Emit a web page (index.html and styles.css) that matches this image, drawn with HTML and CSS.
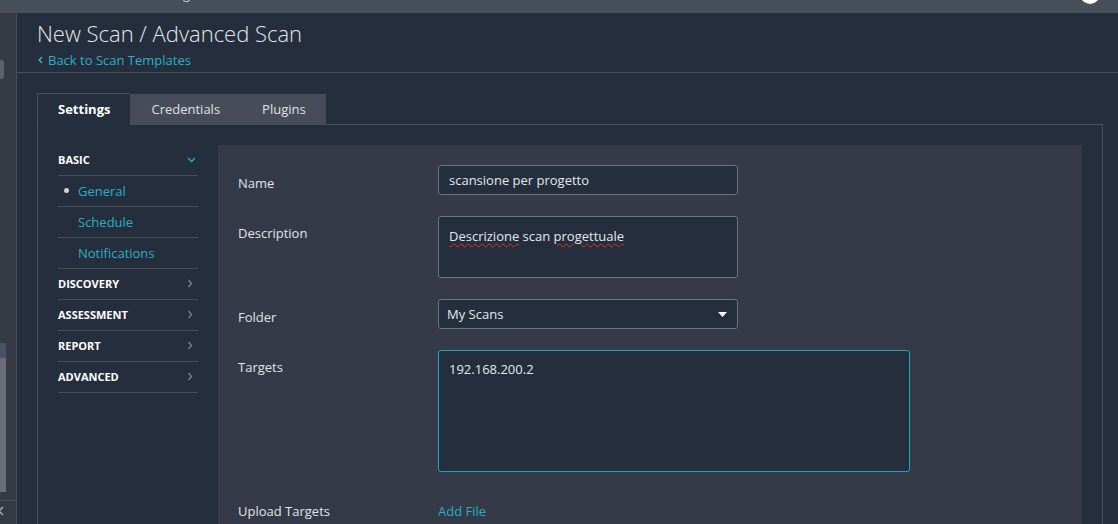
FILE: index.html
```html
<!DOCTYPE html>
<html lang="en">
<head>
<meta charset="utf-8">
<title>New Scan / Advanced Scan</title>
<link rel="stylesheet" href="styles.css">
</head>
<body>
<div class="topbar">
  <span class="top-frag">g</span>
  <span class="avatar"></span>
</div>
<div class="layout">
  <aside class="rail">
    <div class="rail-knob"></div>
    <div class="rail-track">
      <div class="rail-track-top"></div>
      <div class="rail-thumb"></div>
    </div>
    <div class="rail-foot">
      <svg width="8" height="12" viewBox="0 0 8 12"><path d="M6 2 L2 6 L6 10" fill="none" stroke="#aab2c0" stroke-width="1.3"/></svg>
    </div>
  </aside>
  <main class="main">
    <header class="page-head">
      <h1 class="title">New Scan / Advanced Scan</h1>
      <a class="back" href="#">
        <svg class="back-icon" width="5" height="8" viewBox="0 0 5 8"><path d="M4 1 L1.2 4 L4 7" fill="none" stroke="#29b0c8" stroke-width="1.6"/></svg>
        Back to Scan Templates
      </a>
    </header>
    <div class="content">
      <nav class="tabs">
        <span class="tab active">Settings</span>
        <span class="tab">Credentials</span>
        <span class="tab">Plugins</span>
      </nav>
      <div class="panel">
        <ul class="menu">
          <li class="menu-row head open">
            <span>BASIC</span>
            <svg class="chev" width="9" height="6" viewBox="0 0 9 6"><path d="M1 1 L4.5 4.5 L8 1" fill="none" stroke="#29b0c8" stroke-width="1.3"/></svg>
          </li>
          <li class="menu-row sub current"><span class="dot"></span>General</li>
          <li class="menu-row sub">Schedule</li>
          <li class="menu-row sub">Notifications</li>
          <li class="menu-row head">
            <span>DISCOVERY</span>
            <svg class="chev" width="6" height="9" viewBox="0 0 6 9"><path d="M1.5 1 L4.5 4.5 L1.5 8" fill="none" stroke="#7b88a2" stroke-width="1.2"/></svg>
          </li>
          <li class="menu-row head">
            <span>ASSESSMENT</span>
            <svg class="chev" width="6" height="9" viewBox="0 0 6 9"><path d="M1.5 1 L4.5 4.5 L1.5 8" fill="none" stroke="#7b88a2" stroke-width="1.2"/></svg>
          </li>
          <li class="menu-row head">
            <span>REPORT</span>
            <svg class="chev" width="6" height="9" viewBox="0 0 6 9"><path d="M1.5 1 L4.5 4.5 L1.5 8" fill="none" stroke="#7b88a2" stroke-width="1.2"/></svg>
          </li>
          <li class="menu-row head">
            <span>ADVANCED</span>
            <svg class="chev" width="6" height="9" viewBox="0 0 6 9"><path d="M1.5 1 L4.5 4.5 L1.5 8" fill="none" stroke="#7b88a2" stroke-width="1.2"/></svg>
          </li>
        </ul>
        <div class="form">
          <div class="row">
            <div class="label">Name</div>
            <div class="field input">scansione per progetto</div>
          </div>
          <div class="row">
            <div class="label tight">Description</div>
            <div class="field textarea desc"><span class="spell">Descrizione</span> scan <span class="spell">progettuale</span></div>
          </div>
          <div class="row">
            <div class="label">Folder</div>
            <div class="field select">
              <span>My Scans</span>
              <svg width="9" height="5" viewBox="0 0 9 5"><path d="M0 0 H9 L4.5 5 Z" fill="#ffffff"/></svg>
            </div>
          </div>
          <div class="row">
            <div class="label tight">Targets</div>
            <div class="field textarea targets">192.168.200.2</div>
          </div>
          <div class="row">
            <div class="label">Upload Targets</div>
            <a class="addfile" href="#">Add File</a>
          </div>
        </div>
      </div>
    </div>
  </main>
</div>
</body>
</html>
```

FILE: styles.css
```css
* { box-sizing: border-box; }

html, body {
  margin: 0;
  padding: 0;
}

body {
  width: 1118px;
  height: 524px;
  overflow: hidden;
  background: #252e3d;
  font-family: "Open Sans", "DejaVu Sans", sans-serif;
  color: #e2e4e8;
  font-size: 13px;
}

a { text-decoration: none; }

/* top bar */
.topbar {
  height: 13px;
  background: #474f59;
  display: flex;
  overflow: hidden;
}

.top-frag {
  margin-left: 183px;
  margin-top: -14px;
  font-size: 13px;
  line-height: 16px;
  color: #d0d3d8;
}

.avatar {
  margin-left: auto;
  margin-right: 18px;
  margin-top: -16px;
  width: 20px;
  height: 20px;
  border-radius: 50%;
  background: #ffffff;
}

.layout {
  display: flex;
  height: 511px;
}

/* left rail */
.rail {
  width: 17px;
  flex: none;
  background: #353a44;
  border-right: 1px solid #494e58;
  display: flex;
  flex-direction: column;
}

.rail-knob {
  margin-top: 47px;
  width: 4px;
  height: 19px;
  background: #5c626c;
  border-radius: 0 3px 3px 0;
}

.rail-track {
  margin-top: 264px;
  width: 6px;
}

.rail-track-top {
  height: 15px;
  background: #4a5261;
}

.rail-thumb {
  height: 134px;
  background: #6b6e78;
}

.rail-foot {
  margin-top: 8px;
  border-top: 1px solid #4c515a;
  padding-top: 4px;
  display: flex;
  margin-left: -3px;
}

/* main */
.main {
  flex: 1;
  display: flex;
  flex-direction: column;
  min-width: 0;
}

.page-head {
  padding: 5px 20px 3px 20px;
  border-bottom: 1px solid #4a515c;
}

.title {
  margin: 0;
  font-size: 22px;
  font-weight: 300;
  line-height: 31px;
  color: #e4e6ea;
}

.back {
  display: flex;
  align-items: center;
  gap: 5px;
  margin-top: 2px;
  margin-left: 1px;
  font-size: 13px;
  line-height: 18px;
  color: #29b0c8;
}

.content {
  flex: 1;
  padding: 20px 15px 0 20px;
  display: flex;
  flex-direction: column;
  min-height: 0;
}

/* tabs */
.tabs {
  display: flex;
  align-items: flex-end;
  height: 32px;
  margin-bottom: -1px;
  position: relative;
  z-index: 1;
}

.tab {
  height: 31px;
  padding: 0 21px 1px 21px;
  display: flex;
  align-items: center;
  background: #474d58;
  color: #dfe1e5;
  font-size: 13px;
}

.tab:last-child {
  padding-right: 20px;
}

.tab.active {
  height: 32px;
  padding: 0 20px;
  background: #252e3d;
  border: 1px solid #4a515c;
  border-bottom-color: #252e3d;
  border-right: none;
  font-weight: 700;
  color: #ffffff;
}

.panel {
  flex: 1;
  border: 1px solid #4a515c;
  border-bottom: none;
  padding: 20px 20px 0 20px;
  display: flex;
  align-items: flex-start;
  min-height: 0;
}

/* side menu */
.menu {
  list-style: none;
  margin: 0 20px 0 0;
  padding: 0;
  width: 140px;
  flex: none;
}

.menu-row {
  height: 31px;
  border-bottom: 1px solid #464e5c;
  display: flex;
  align-items: center;
}

.menu-row.head {
  justify-content: space-between;
  font-size: 11px;
  font-weight: 700;
  color: #ffffff;
  padding-right: 5px;
  padding-bottom: 2px;
}

.menu-row.head.open {
  padding-right: 2px;
}

.menu-row.head .chev { flex: none; margin-top: 1px; }

.menu-row.sub {
  padding-left: 20px;
  font-size: 13px;
  color: #29b0c8;
}

.dot {
  width: 5px;
  height: 5px;
  border-radius: 50%;
  background: #d2d4d8;
  margin-left: -14px;
  margin-right: 9px;
  margin-top: -1px;
}

/* form */
.form {
  flex: 1;
  align-self: stretch;
  background: #343a48;
  padding: 20px;
}

.row {
  display: flex;
  align-items: flex-start;
  margin-bottom: 21px;
}

.label {
  width: 200px;
  flex: none;
  padding-top: 9px;
  line-height: 18px;
  font-size: 13px;
  color: #e2e4e8;
}

.label.tight {
  padding-top: 8px;
}

.field {
  background: #252e3d;
  border: 1px solid #6b7385;
  border-radius: 3px;
  color: #e6e8ec;
  font-size: 13px;
  line-height: 18px;
}

.input {
  width: 300px;
  height: 30px;
  padding: 5px 10px;
}

.textarea {
  padding: 10px 10px;
}

.desc {
  width: 300px;
  height: 62px;
  padding-top: 10px;
}

.targets {
  width: 472px;
  height: 122px;
  padding-top: 9px;
  border-color: #1aa6bb;
}

.select {
  width: 300px;
  height: 30px;
  padding: 0 10px 0 8px;
  display: flex;
  align-items: center;
  justify-content: space-between;
}

.spell {
  text-decoration: underline wavy #e0302e;
  text-decoration-thickness: 1px;
  text-underline-offset: 2px;
}

.addfile {
  padding-top: 9px;
  line-height: 18px;
  font-size: 13px;
  color: #29b0c8;
}
```
